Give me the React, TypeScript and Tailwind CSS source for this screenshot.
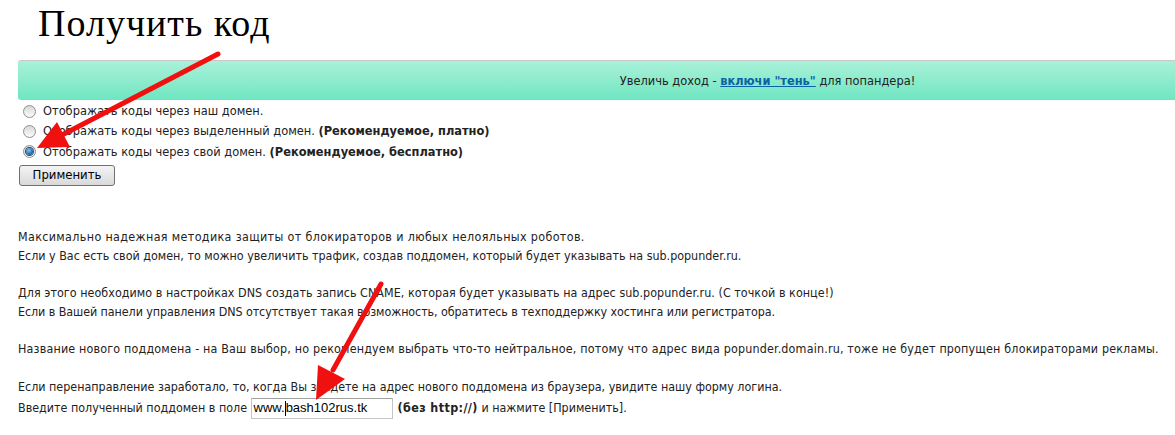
import React from "react";

const body = "font-['DejaVu_Sans_Condensed','DejaVu_Sans',sans-serif]";

function Radio({ checked }: { checked?: boolean }) {
  return (
    <span className="relative inline-flex h-[13px] w-[13px] items-center justify-center rounded-full border border-[#8f8f8f] bg-gradient-to-b from-[#d8d8d8] to-[#fbfbfb]">
      {checked && (
        <span className="h-[7px] w-[7px] rounded-full bg-[radial-gradient(circle_at_40%_35%,#7ec8f5,#1a5e9c_70%)] shadow-[0_0_0_1px_#1d4f7e]" />
      )}
    </span>
  );
}

export default function App() {
  return (
    <div className={`relative h-[435px] w-[1175px] overflow-hidden bg-white text-[#222] ${body}`}>
      <div className="pl-[38px] pt-[2px] font-['Liberation_Serif',serif] text-[38px] leading-[42px] tracking-[1px] text-black">
        Получить код
      </div>

      <div className="ml-[18px] mt-[16px] flex h-[40px] w-[1497px] items-center justify-center rounded-l-[3px] border-t border-[#c9c9c9] bg-gradient-to-b from-[#a9f1d9] to-[#6de6c1] font-['Liberation_Sans_Narrow','DejaVu_Sans_Condensed',sans-serif] text-[12.7px] text-[#222]">
        <span className="pl-[2px]">
          Увеличь доход -{" "}
          <a className="font-bold text-[#0b62a6] underline">включи "тень"</a> для попандера!
        </span>
      </div>

      <div className="ml-[23px] mt-[1px] flex flex-col text-[12.7px]">
        <label className="flex h-[20px] items-center gap-[7px]">
          <Radio />
          <span>Отображать коды через наш домен.</span>
        </label>
        <label className="flex h-[20px] items-center gap-[7px]">
          <Radio />
          <span>
            Отображать коды через выделенный домен. <b>(Рекомендуемое, платно)</b>
          </span>
        </label>
        <label className="flex h-[21px] items-center gap-[7px]">
          <Radio checked />
          <span>
            Отображать коды через свой домен. <b>(Рекомендуемое, бесплатно)</b>
          </span>
        </label>
      </div>
      <button className="ml-[19px] mt-[1px] h-[21px] w-[96px] rounded-[3px] border border-[#707070] bg-gradient-to-b from-[#f4f4f4] to-[#d9d9d9] text-[13px] leading-[18px] text-black">
        Применить
      </button>

      <div className="ml-[18px] mt-[42px] whitespace-nowrap text-[12.4px] leading-[18.7px]">
        <div className="tracking-[0.36px]">Максимально надежная методика защиты от блокираторов и любых нелояльных роботов.</div>
        <div>Если у Вас есть свой домен, то можно увеличить трафик, создав поддомен, который будет указывать на sub.popunder.ru.</div>
        <div className="h-[18.7px]" />
        <div className="tracking-[0.05px]">Для этого необходимо в настройках DNS создать запись CNAME, которая будет указывать на адрес sub.popunder.ru. (С точкой в конце!)</div>
        <div className="tracking-[-0.07px]">Если в Вашей панели управления DNS отсутствует такая возможность, обратитесь в техподдержку хостинга или регистратора.</div>
        <div className="h-[18.7px]" />
        <div className="tracking-[0.18px]">Название нового поддомена - на Ваш выбор, но рекомендуем выбрать что-то нейтральное, потому что адрес вида popunder.domain.ru, тоже не будет пропущен блокираторами рекламы.</div>
        <div className="h-[18.7px]" />
        <div>Если перенаправление заработало, то, когда Вы зайдете на адрес нового поддомена из браузера, увидите нашу форму логина.</div>
        <div className="mt-[2px] flex items-center">
          <span>Введите полученный поддомен в поле&nbsp;</span>
          <span className="flex h-[21px] w-[142px] items-center border border-[#c5c5c5] border-t-[#a0a0a0] bg-white pl-[2px] font-['Liberation_Sans',sans-serif] text-[13px] text-black">
            www.<span className="inline-block h-[15px] w-px bg-black" />bash102rus.tk
          </span>
          <span className="ml-[5px]">
            <b className="tracking-[0.4px]">(без http://)</b> и нажмите [Применить].
          </span>
        </div>
      </div>

      <svg className="pointer-events-none absolute left-0 top-0" width="1175" height="435">
        <line x1="218" y1="54" x2="62" y2="135" stroke="#f01010" strokeWidth="5" strokeLinecap="round" />
        <polygon points="37,148 70,147 57,122" fill="#f01010" />
        <line x1="381" y1="284" x2="333" y2="370" stroke="#f01010" strokeWidth="5" strokeLinecap="round" />
        <polygon points="316,400 345,379 318,365" fill="#f01010" />
      </svg>
    </div>
  );
}
